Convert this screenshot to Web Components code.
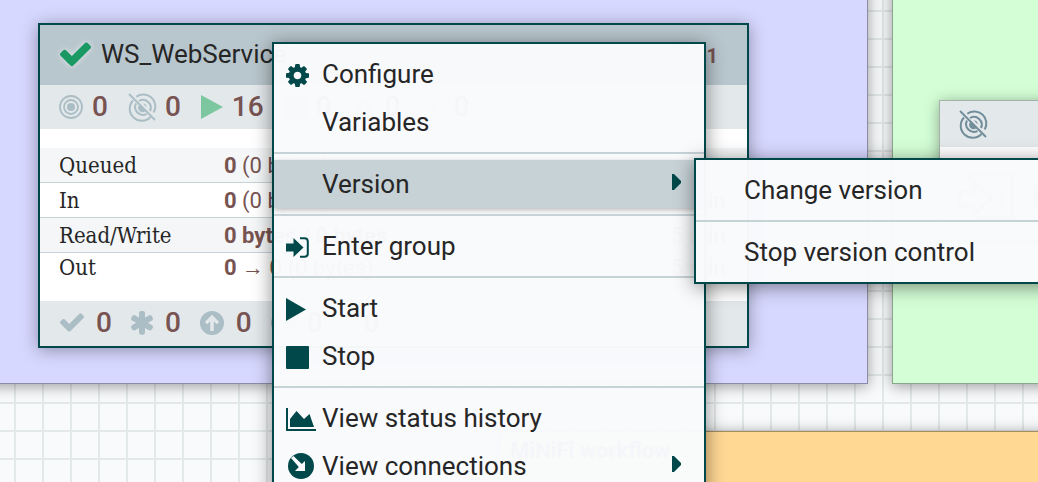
<!DOCTYPE html>
<html lang="en">
<head>
<meta charset="utf-8">
<title>Flow canvas</title>
<style>
  html, body { height: 100%; }
  body { margin: 0; overflow: hidden; font-family: Roboto, "Liberation Sans", sans-serif; color: #262626; }
</style>
</head>
<body>
<flow-canvas>
  <canvas-label style="--x:-40px; --y:-40px; --w:908px; --h:424px; --fill:#d7d8ff"></canvas-label>
  <canvas-label style="--x:892px; --y:-40px; --w:600px; --h:424px; --fill:#d4ffd6"></canvas-label>
  <canvas-label style="--x:499px; --y:431px; --w:900px; --h:300px; --fill:#ffd894">MiNiFi workflow</canvas-label>
  <process-group style="--x:38px; --y:23px" version="1">WS_WebService</process-group>
  <processor-card style="--x:939px; --y:100px"></processor-card>

  <context-menu style="--x:272px; --y:42px; --w:434px">
    <menu-item icon="cog">Configure</menu-item>
    <menu-item>Variables</menu-item>
    <menu-separator></menu-separator>
    <menu-item submenu active>Version</menu-item>
    <menu-separator></menu-separator>
    <menu-item icon="enter">Enter group</menu-item>
    <menu-separator></menu-separator>
    <menu-item icon="play">Start</menu-item>
    <menu-item icon="stop">Stop</menu-item>
    <menu-separator></menu-separator>
    <menu-item icon="chart">View status history</menu-item>
    <menu-item icon="connections" submenu>View connections</menu-item>
  </context-menu>
  <context-menu style="--x:694px; --y:158px; --w:434px">
    <menu-item>Change version</menu-item>
    <menu-separator></menu-separator>
    <menu-item>Stop version control</menu-item>
  </context-menu>
</flow-canvas>

<script>
// name: [viewBox, width, height, markup]
const ICONS = {
  check: ['121 314 1550 1208', 24, 19, '<path d="M1671 566q0 40-28 68l-724 724-136 136q-28 28-68 28t-68-28l-136-136-362-362q-28-28-28-68t28-68l136-136q28-28 68-28t68 28l294 295 656-657q28-28 68-28t68 28l136 136q28 28 28 68z"/>'],
  cog: ['128 128 1536 1536', 23, 23, '<path d="M1152 896q0-106-75-181t-181-75-181 75-75 181 75 181 181 75 181-75 75-181zm512-109v222q0 12-8 23t-20 13l-185 28q-19 54-39 91 35 50 107 138 10 12 10 25t-9 23q-27 37-99 108t-94 71q-12 0-26-9l-138-108q-44 23-91 38-16 136-29 186-7 28-36 28h-222q-14 0-24.5-8.5t-11.5-21.5l-28-184q-49-16-90-37l-141 107q-10 9-25 9-14 0-25-11-126-114-165-168-7-10-7-23 0-12 8-23 15-21 51-66.5t54-70.5q-27-50-41-99l-183-27q-13-2-21-12.5t-8-23.5v-222q0-12 8-23t19-13l186-28q14-46 39-92-40-57-107-138-10-12-10-24 0-10 9-23 26-36 98.5-107.5t94.5-71.5q13 0 26 10l138 107q44-23 91-38 16-136 29-186 7-28 36-28h222q14 0 24.5 8.5t11.5 21.5l28 184q49 16 90 37l142-107q9-9 24-9 13 0 25 10 129 119 165 170 7 8 7 22 0 12-8 23-15 21-51 66.5t-54 70.5q26 50 41 98l183 28q13 2 21 12.5t8 23.5z"/>'],
  asterisk: ['182 128 1428 1536', 22, 24, '<path d="M1546 1050q46 26 59.5 77.5t-12.5 97.5l-64 110q-26 46-77.5 59.5t-97.5-12.5l-266-153v307q0 52-38 90t-90 38h-128q-52 0-90-38t-38-90v-307l-266 153q-46 26-97.5 12.5t-77.5-59.5l-64-110q-26-46-12.5-97.5t59.5-77.5l266-154-266-154q-46-26-59.5-77.5t12.5-97.5l64-110q26-46 77.5-59.5t97.5 12.5l266 153v-307q0-52 38-90t90-38h128q52 0 90 38t38 90v307l266-153q46-26 97.5-12.5t77.5 59.5l64 110q26 46 12.5 97.5t-59.5 77.5l-266 154z"/>'],
  up: ['0 0 24 24', 24, 24, '<path fill-rule="evenodd" d="M12 0a12 12 0 1 0 0 24a12 12 0 1 0 0-24zM12 3.700L19.200 10.900L16.800 13.300L13.800 10.300V20H10.200V10.300L7.200 13.300L4.800 10.900z"/>'],
  alert: ['0 0 24 24', 24, 24, '<path fill-rule="evenodd" d="M12 0a12 12 0 1 0 0 24a12 12 0 1 0 0-24zM10 4h4v10h-4zM10 16h4v4h-4z"/>'],
  question: ['0 0 10 24', 10, 24, '<path d="M1 8q0-4 4-4t4 4q0 2-4 5v3M4 18h2v3h-2z" fill="none" stroke="currentColor" stroke-width="2"/>'],
  target: ['0 0 24 24', 24, 24, '<circle cx="12" cy="12" r="4"/><g fill="none" stroke="currentColor" stroke-width="1.800"><circle cx="12" cy="12" r="7"/><circle cx="12" cy="12" r="11"/></g>'],
  untarget: ['0 0 28 28', 28, 28, '<path d="M11.500 11.500A4 4 0 0 0 17.500 18z"/><path d="M15 10.500a4 4 0 0 1 3.600 3.800z"/><g fill="none" stroke="currentColor" stroke-width="2"><path d="M8.300 3.700A12 12 0 0 1 25.700 19.500"/><path d="M5 7.500A12 12 0 0 0 22.500 24"/><path d="M11 8A7.800 7.800 0 0 1 22 18"/><path d="M8 10.500A7.800 7.800 0 0 0 18.500 21"/><path d="M1 1L27 27"/></g>'],
  play: ['0 0 20 23', 20, 23, '<path d="M0 0L20 11.500L0 23z"/>'],
  run: ['0 0 22 24', 22, 24, '<path d="M0 0L22 12L0 24z"/>'],
  stop: ['0 0 23 23', 23, 23, '<rect width="23" height="23" rx="1"/>'],
  warn: ['0 0 24 24', 24, 24, '<path fill-rule="evenodd" d="M12 1L24 23H0zM11 9h2v7h-2zM11 18h2v2h-2z"/>'],
  bolt: ['0 0 24 24', 24, 24, '<path d="M15 0L5 13h6l-3 11l11-15h-6z"/>'],
  enter: ['0 0 23 21', 23, 21, '<path d="M0 6.500H7.500V1L17.500 10.500L7.500 20V14.500H0z"/><path d="M14 1.200H18.500Q21.800 1.200 21.800 4.500V16.500Q21.800 19.800 18.500 19.800H14" fill="none" stroke="currentColor" stroke-width="2"/>'],
  chart: ['0 0 30 23', 30, 23, '<path d="M0 0H2V21H30V23H0z"/><path d="M4 19V11L10.500 3L18 11L23.500 6L28 19z"/>'],
  connections: ['0 0 26 26', 26, 26, '<circle cx="13" cy="13" r="13"/><path d="M3 5L5.500 3L13.800 11L17 8V18H7L10.800 14z" fill="#f9fafc"/>'],
  caret: ['0 0 9 16', 9, 16, '<path d="M0 0L2 0L9 7V9L2 16H0z"/>'],
  input: ['0 0 56 48', 56, 48, '<path d="M12 10V2H54V46H18M2 20H16V10L34 26L16 42V34H2zM44 18V34" fill="none" stroke="currentColor" stroke-width="3"/>'],
  registry: ['0 0 24 24', 24, 24, '<g fill="none" stroke="currentColor" stroke-width="2"><circle cx="4" cy="4" r="3"/><circle cx="20" cy="12" r="3"/><circle cx="4" cy="20" r="3"/></g><circle cx="12" cy="4" r="3"/><circle cx="20" cy="4" r="3"/><circle cx="4" cy="12" r="3"/><circle cx="12" cy="12" r="3"/><circle cx="12" cy="20" r="3"/><circle cx="20" cy="20" r="3"/>']
};

function define(name, render) {
  customElements.define(name, class extends HTMLElement {
    constructor() {
      super();
      const t = document.createElement('template');
      t.innerHTML = render(this);
      this.attachShadow({ mode: 'open' }).append(t.content.cloneNode(true));
    }
  });
}

define('flow-icon', el => {
  const [box, w, h, body] = ICONS[el.getAttribute('name')];
  return `<style>
    :host { display: inline-flex; flex: none; width: var(--icon-w, ${w}px); }
    svg { display: block; width: 100%; height: auto; fill: currentColor; overflow: visible; }
  </style><svg viewBox="${box}" aria-hidden="true">${body}</svg>`;
});

define('flow-canvas', () => `<style>
  :host {
    display: block; position: relative; min-height: 100vh; overflow: hidden;
    background-color: #f9fafc;
    background-image: linear-gradient(to right, #e3e8e9 2px, transparent 2px), linear-gradient(#e3e8e9 2px, transparent 2px);
    background-size: 28px 28px; background-position: 14px 10px;
  }
</style><slot></slot>`);

define('canvas-label', () => `<style>
  :host {
    display: block; position: absolute; box-sizing: border-box;
    left: var(--x); top: var(--y); width: var(--w); height: var(--h);
    padding: 6px 10px; background: var(--fill);
    border: 1px solid rgba(0, 0, 0, .35); box-shadow: 0 2px 14px rgba(0, 0, 0, .4);
    font-size: 22px; line-height: 26px; font-weight: 700; color: #4855a8;
  }
</style><slot></slot>`);

define('status-count', el => `<style>
  :host { display: flex; align-items: center; gap: var(--count-gap); font-size: 28px; line-height: 32px; font-weight: 500; color: #775351; }
  flow-icon { color: ${el.hasAttribute('running') ? '#7dc7a0' : '#abbdc5'}; }
</style><flow-icon name="${el.getAttribute('icon')}"></flow-icon><span><slot></slot></span>`);

define('process-group', el => `<style>
  :host {
    display: block; position: absolute; left: var(--x); top: var(--y); width: 707px;
    background: #fff; border: 2px solid #004849; box-shadow: 0 2px 16px rgba(0, 0, 0, .35);
  }
  header { display: flex; align-items: center; gap: 10px; box-sizing: border-box; height: 60px; padding: 0 29px 2px 20px; background: #b8c6cd; }
  header flow-icon { --icon-w: 31px; color: #1a9964; filter: drop-shadow(0 0 3px #e3e8eb); }
  h2 { flex: 1; margin: 0; font-size: 26px; line-height: 30px; font-weight: 400; }
  .version { display: flex; align-items: center; gap: 8px; padding-top: 4px; font-size: 20px; line-height: 22px; font-weight: 700; color: #775351; }
  .version flow-icon { --icon-w: 22px; color: #728e9b; filter: none; }
  .counts { display: flex; gap: 20px; height: 44px; padding: 0 19px; background: #e3e8eb; --count-gap: 9px; }
  .sync { gap: 19px; box-sizing: border-box; height: 45px; padding: 0 20px 2px; --count-gap: 12px; }
  table { width: 100%; margin: 19px 0 18px; border-collapse: collapse; font-size: 22px; line-height: 28px; color: #775351; }
  tr { height: 35px; }
  tr:last-child { height: 30px; }
  tr:nth-child(odd) { background: #f4f6f7; }
  tr:not(:last-child) { box-shadow: inset 0 -1px #c7d2d7; }
  th, td { padding: 0; text-align: left; font-weight: 400; }
  th { width: 165px; padding-left: 19px; font-family: "DejaVu Serif Condensed", "DejaVu Serif", serif; color: #262626; }
  td:last-child { width: 76px; }
  b { font-weight: 700; }
</style>
<header><flow-icon name="check"></flow-icon><h2><slot></slot></h2>
  <span class="version"><flow-icon name="registry"></flow-icon>${el.getAttribute('version')}</span></header>
<div class="counts">
  <status-count icon="target">0</status-count><status-count icon="untarget">0</status-count>
  <status-count icon="run" running>16</status-count><status-count icon="stop">0</status-count>
  <status-count icon="warn">0</status-count><status-count icon="bolt">0</status-count>
</div>
<table>
  <tr><th scope="row">Queued</th><td><b>0</b> (0 bytes)</td><td></td></tr>
  <tr><th scope="row">In</th><td><b>0</b> (0 bytes) → <b>0</b></td><td>5 min</td></tr>
  <tr><th scope="row">Read/Write</th><td><b>0 bytes / 0 bytes</b></td><td>5 min</td></tr>
  <tr><th scope="row">Out</th><td><b>0</b> → <b>0</b> (0 bytes)</td><td>5 min</td></tr>
</table>
<div class="counts sync">
  <status-count icon="check">0</status-count><status-count icon="asterisk">0</status-count>
  <status-count icon="up">0</status-count><status-count icon="alert">0</status-count>
  <status-count icon="question">0</status-count>
</div>`);

define('processor-card', () => `<style>
  :host {
    display: block; position: absolute; left: var(--x); top: var(--y); width: 600px;
    background: #fff; border: 1px solid #a3b3a8; box-shadow: 0 2px 14px rgba(0, 0, 0, .35); color: #728e9b;
  }
  .state { display: flex; align-items: center; box-sizing: border-box; height: 46px; padding: 0 19px 1px; background: #e3e8eb; }
  .body { display: flex; gap: 20px; padding: 25px 18px 20px; }
</style>
<div class="state"><flow-icon name="untarget"></flow-icon></div>
<div class="body"><flow-icon name="input"></flow-icon><flow-icon name="play"></flow-icon></div>`);

define('context-menu', () => `<style>
  :host {
    display: flex; flex-direction: column; position: absolute; box-sizing: border-box;
    left: var(--x); top: var(--y); width: var(--w); padding: 6px 0;
    background: rgba(249, 250, 252, .98); border: 2px solid #004849;
    box-shadow: 0 3px 18px rgba(0, 0, 0, .45);
  }
</style><slot></slot>`);

define('menu-separator', () => `<style>
  :host { display: block; height: 2px; margin: 6px 0; background: #c7d2d7; }
</style>`);

define('menu-item', el => `<style>
  :host { display: block; }
  button {
    display: flex; align-items: center; width: 100%; height: 48px; padding: 0 23px 0 12px;
    border: 0; background: none; font: inherit; font-size: 26px; line-height: 30px; color: #262626; text-align: left;
  }
  :host([active]) button { background: #c7d2d7; box-shadow: 0 2px 5px rgba(0, 0, 0, .25); }
  .icon { display: flex; width: 36px; padding-top: 2px; color: #004849; }
  :host([icon="connections"]) .icon { box-sizing: border-box; padding: 0 0 0 2px; }
  .label { flex: 1; }
  .more { color: #004849; padding-bottom: 4px; }
</style>
<button type="button"><span class="icon">${el.getAttribute('icon') ? `<flow-icon name="${el.getAttribute('icon')}"></flow-icon>` : ''}</span>
<span class="label"><slot></slot></span>${el.hasAttribute('submenu') ? '<flow-icon class="more" name="caret"></flow-icon>' : ''}</button>`);
</script>
</body>
</html>
